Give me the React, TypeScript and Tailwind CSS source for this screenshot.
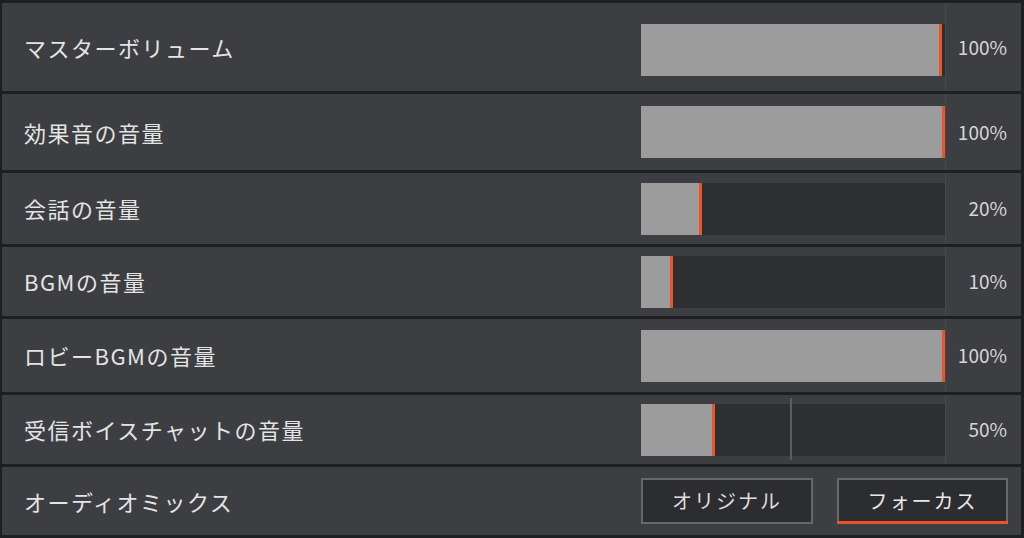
type Slider = {
  label: string;
  value: number;
  fill: number; // filled part of the 304px track, in px
  height: string;
  mark?: boolean;
  shift?: boolean;
};

const sliders: Slider[] = [
  { label: "マスターボリューム", value: 100, fill: 301, height: "h-[88px]", shift: true },
  { label: "効果音の音量", value: 100, fill: 304, height: "h-[76px]" },
  { label: "会話の音量", value: 20, fill: 61, height: "h-[71px]" },
  { label: "BGMの音量", value: 10, fill: 32, height: "h-[69px]" },
  { label: "ロビーBGMの音量", value: 100, fill: 304, height: "h-[73px]" },
  { label: "受信ボイスチャットの音量", value: 50, fill: 74, height: "h-[69px]", mark: true },
];

function SliderRow({ s }: { s: Slider }) {
  return (
    <div className={`flex items-center bg-[#3c3e42] ${s.height}`}>
      <div className="flex-1 pl-[22px] text-[22px] tracking-[1.5px] text-[#e4e4e4]">
        {s.label}
      </div>
      <div className={`relative h-[52px] w-[304px] bg-[#2e2f33] ${s.shift ? "mt-[5px]" : ""}`}>
        <div
          className="h-full border-r-[3px] border-[#ea5427] bg-[#9c9c9c]"
          style={{ width: s.fill }}
        />
        {s.mark && (
          <div className="absolute left-[149px] top-[-6px] h-[62px] w-[2px] bg-[#5a5c60]" />
        )}
      </div>
      <div className="flex h-full w-[76px] items-center justify-end border-l border-[#46484c] pr-[14px] text-[19px] text-[#d6d6d6]">
        {s.value}%
      </div>
    </div>
  );
}

export default function App() {
  return (
    <main
      className="flex h-[538px] w-[1024px] flex-col gap-[3px] bg-[#1e1f22] pb-[3px] pl-[2px] pr-[3px] pt-[3px]"
      style={{ fontFamily: '"Noto Sans CJK JP", "Noto Sans", sans-serif' }}
    >
      {sliders.map((s) => (
        <SliderRow key={s.label} s={s} />
      ))}
      <div className="flex h-[68px] items-center bg-[#3c3e42]">
        <div className="flex-1 pl-[22px] text-[22px] tracking-[1.5px] text-[#e4e4e4]">
          オーディオミックス
        </div>
        <div className="flex gap-[24px] pr-[13px]">
          <button className="flex h-[46px] w-[172px] items-center justify-center border-2 border-[#67686b] bg-[#2c2d31] text-[20px] tracking-[2px] text-[#dedede]">
            オリジナル
          </button>
          <button className="relative flex h-[46px] w-[171px] items-center justify-center border-2 border-[#67686b] bg-[#2c2d31] text-[20px] tracking-[2px] text-[#e8e8e8]">
            フォーカス
            <span className="absolute bottom-[-2px] left-[-2px] right-[-2px] h-[3px] bg-[#ea5427]" />
          </button>
        </div>
      </div>
    </main>
  );
}
